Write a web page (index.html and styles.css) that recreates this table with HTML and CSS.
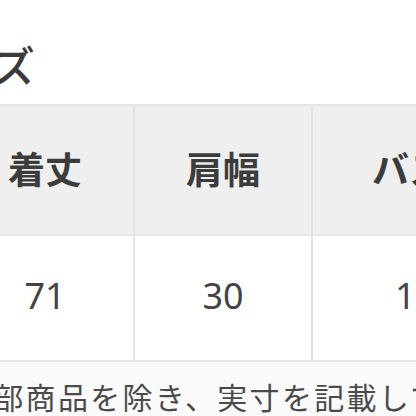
FILE: index.html
```html
<!DOCTYPE html>
<html lang="ja">
<head>
<meta charset="utf-8">
<link rel="stylesheet" href="styles.css">
</head>
<body>
<div class="sheet">
  <div class="title"><span class="title-text">サイズ</span></div>
  <div class="table">
    <div class="cell head">着丈</div>
    <div class="cell head">肩幅</div>
    <div class="cell head last">バスト</div>
    <div class="cell body">71</div>
    <div class="cell body">30</div>
    <div class="cell body last">100</div>
  </div>
  <div class="note"><span class="note-text">一部商品を除き、実寸を記載しています。</span></div>
</div>
</body>
</html>
```
FILE: styles.css
```css
html, body {
  margin: 0;
  padding: 0;
  background: #ffffff;
}
body {
  width: 416px;
  height: 416px;
  overflow: hidden;
  font-family: "Noto Sans CJK JP", "Noto Sans", sans-serif;
  color: #3a3a3a;
}
.sheet {
  margin-left: -43px;
  width: 640px;
}
.title {
  height: 104px;
  box-sizing: border-box;
  padding-top: 40px;
  font-size: 42px;
  line-height: 48px;
  white-space: nowrap;
}
.title-text {
  display: inline-block;
  margin-left: -47px;
  font-weight: 500;
}
.table {
  display: grid;
  grid-template-columns: 178px 178px 240px;
  grid-template-rows: 130px 124px;
  border-top: 2px solid #e6e6e6;
  border-bottom: 2px solid #e4e4e4;
  box-sizing: border-box;
}
.cell {
  display: flex;
  align-items: center;
  justify-content: center;
  border-right: 2px solid #e2e2e2;
  white-space: nowrap;
}
.cell.last {
  border-right: none;
  justify-content: flex-start;
  padding-left: 59px;
}
.head {
  background: #efefef;
  font-size: 37px;
  font-weight: 700;
  color: #3c3c3c;
  border-bottom: 2px solid #e6e6e6;
  padding-bottom: 4px;
}
.body {
  background: #ffffff;
  font-family: "Noto Sans", "Noto Sans CJK JP", sans-serif;
  font-size: 36px;
  color: #444444;
  padding-bottom: 6px;
}
.cell.body.first {
  padding-left: 4px;
}
.body.last {
  padding-left: 82px;
}
.note {
  background: #fafafa;
  padding-top: 14px;
  font-size: 30px;
  line-height: 40px;
  white-space: nowrap;
  color: #4a4a4a;
}
.note-text {
  display: inline-block;
  margin-left: 4px;
  letter-spacing: 2.3px;
}
```
